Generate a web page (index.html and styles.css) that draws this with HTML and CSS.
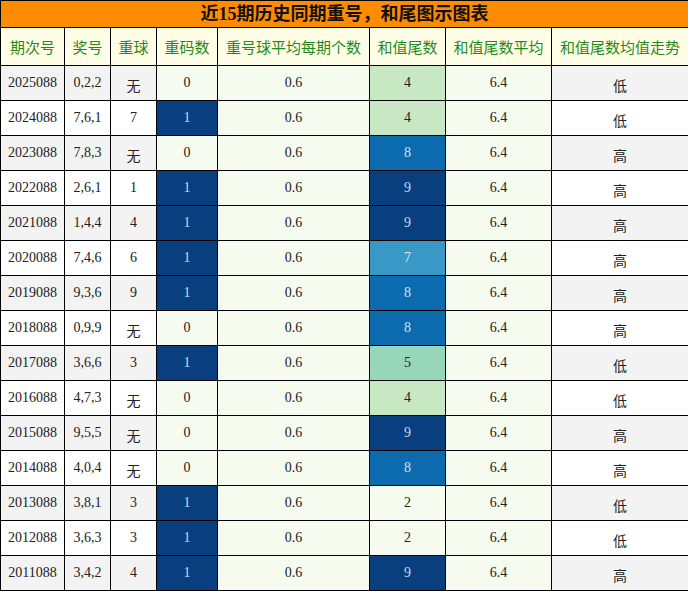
FILE: index.html
```html
<!DOCTYPE html>
<html lang="zh">
<head>
<meta charset="utf-8">
<link rel="stylesheet" href="styles.css">
</head>
<body>
<table class="chart">
<colgroup>
<col class="c1"><col class="c2"><col class="c3"><col class="c4"><col class="c5"><col class="c6"><col class="c7"><col class="c8">
</colgroup>
<tr class="title-row"><td colspan="8" class="title">近15期历史同期重号，和尾图示图表</td></tr>
<tr class="head">
<th>期次号</th><th>奖号</th><th>重球</th><th>重码数</th><th>重号球平均每期个数</th><th>和值尾数</th><th>和值尾数平均</th><th>和值尾数均值走势</th>
</tr>
<tr class="odd"><td>2025088</td><td>0,2,2</td><td class="cjk">无</td><td class="lg">0</td><td class="lg">0.6</td><td class="v4">4</td><td class="lg">6.4</td><td class="cjk">低</td></tr>
<tr><td>2024088</td><td>7,6,1</td><td>7</td><td class="v9">1</td><td class="lg">0.6</td><td class="v4">4</td><td class="lg">6.4</td><td class="cjk">低</td></tr>
<tr class="odd"><td>2023088</td><td>7,8,3</td><td class="cjk">无</td><td class="lg">0</td><td class="lg">0.6</td><td class="v8">8</td><td class="lg">6.4</td><td class="cjk">高</td></tr>
<tr><td>2022088</td><td>2,6,1</td><td>1</td><td class="v9">1</td><td class="lg">0.6</td><td class="v9">9</td><td class="lg">6.4</td><td class="cjk">高</td></tr>
<tr class="odd"><td>2021088</td><td>1,4,4</td><td>4</td><td class="v9">1</td><td class="lg">0.6</td><td class="v9">9</td><td class="lg">6.4</td><td class="cjk">高</td></tr>
<tr><td>2020088</td><td>7,4,6</td><td>6</td><td class="v9">1</td><td class="lg">0.6</td><td class="v7">7</td><td class="lg">6.4</td><td class="cjk">高</td></tr>
<tr class="odd"><td>2019088</td><td>9,3,6</td><td>9</td><td class="v9">1</td><td class="lg">0.6</td><td class="v8">8</td><td class="lg">6.4</td><td class="cjk">高</td></tr>
<tr><td>2018088</td><td>0,9,9</td><td class="cjk">无</td><td class="lg">0</td><td class="lg">0.6</td><td class="v8">8</td><td class="lg">6.4</td><td class="cjk">高</td></tr>
<tr class="odd"><td>2017088</td><td>3,6,6</td><td>3</td><td class="v9">1</td><td class="lg">0.6</td><td class="v5">5</td><td class="lg">6.4</td><td class="cjk">低</td></tr>
<tr><td>2016088</td><td>4,7,3</td><td class="cjk">无</td><td class="lg">0</td><td class="lg">0.6</td><td class="v4">4</td><td class="lg">6.4</td><td class="cjk">低</td></tr>
<tr class="odd"><td>2015088</td><td>9,5,5</td><td class="cjk">无</td><td class="lg">0</td><td class="lg">0.6</td><td class="v9">9</td><td class="lg">6.4</td><td class="cjk">高</td></tr>
<tr><td>2014088</td><td>4,0,4</td><td class="cjk">无</td><td class="lg">0</td><td class="lg">0.6</td><td class="v8">8</td><td class="lg">6.4</td><td class="cjk">高</td></tr>
<tr class="odd"><td>2013088</td><td>3,8,1</td><td>3</td><td class="v9">1</td><td class="lg">0.6</td><td class="lg">2</td><td class="lg">6.4</td><td class="cjk">低</td></tr>
<tr><td>2012088</td><td>3,6,3</td><td>3</td><td class="v9">1</td><td class="lg">0.6</td><td class="lg">2</td><td class="lg">6.4</td><td class="cjk">低</td></tr>
<tr class="odd"><td>2011088</td><td>3,4,2</td><td>4</td><td class="v9">1</td><td class="lg">0.6</td><td class="v9">9</td><td class="lg">6.4</td><td class="cjk">高</td></tr>
</table>
</body>
</html>
```
FILE: styles.css
```css
html, body {
  margin: 0;
  padding: 0;
  background: #ffffff;
}
.chart {
  width: 688px;
  table-layout: fixed;
  border-collapse: collapse;
  font-family: "Liberation Serif", "Noto Sans CJK SC", serif;
  font-size: 14px;
  color: #222;
}
.c1 { width: 64px; }
.c2 { width: 46px; }
.c3 { width: 46px; }
.c4 { width: 61px; }
.c5 { width: 152px; }
.c6 { width: 76px; }
.c7 { width: 106px; }
.c8 { width: 137px; }
.chart td, .chart th {
  border: 1px solid #000;
  text-align: center;
  padding: 0;
  height: 34px;
  overflow: hidden;
  white-space: nowrap;
}
.title-row .title {
  background: #ff8c00;
  height: 26px;
  font-family: "Liberation Serif", "Noto Sans CJK SC", serif;
  font-weight: bold;
  font-size: 18px;
  color: #111;
  line-height: 26px;
}
.head th {
  background: #fffde6;
  color: #1f8a1f;
  font-family: "Noto Sans CJK SC", sans-serif;
  font-weight: normal;
  font-size: 15px;
  height: 37px;
}
.odd td { background: #f3f3f3; }
.chart td.cjk {
  font-family: "Noto Sans CJK SC", sans-serif;
  font-size: 14px;
  padding-top: 3px;
  height: 31px;
}
.chart td.lg { background: #f5fbef; }
.chart td.v4 { background: #c7e8c2; }
.chart td.v5 { background: #98d6bc; }
.chart td.v7 { background: #3a98c6; color: #d8ecf6; }
.chart td.v8 { background: #0c6aae; color: #cfe3f4; }
.chart td.v9 { background: #0a3f7f; color: #c6d8ec; }
```
